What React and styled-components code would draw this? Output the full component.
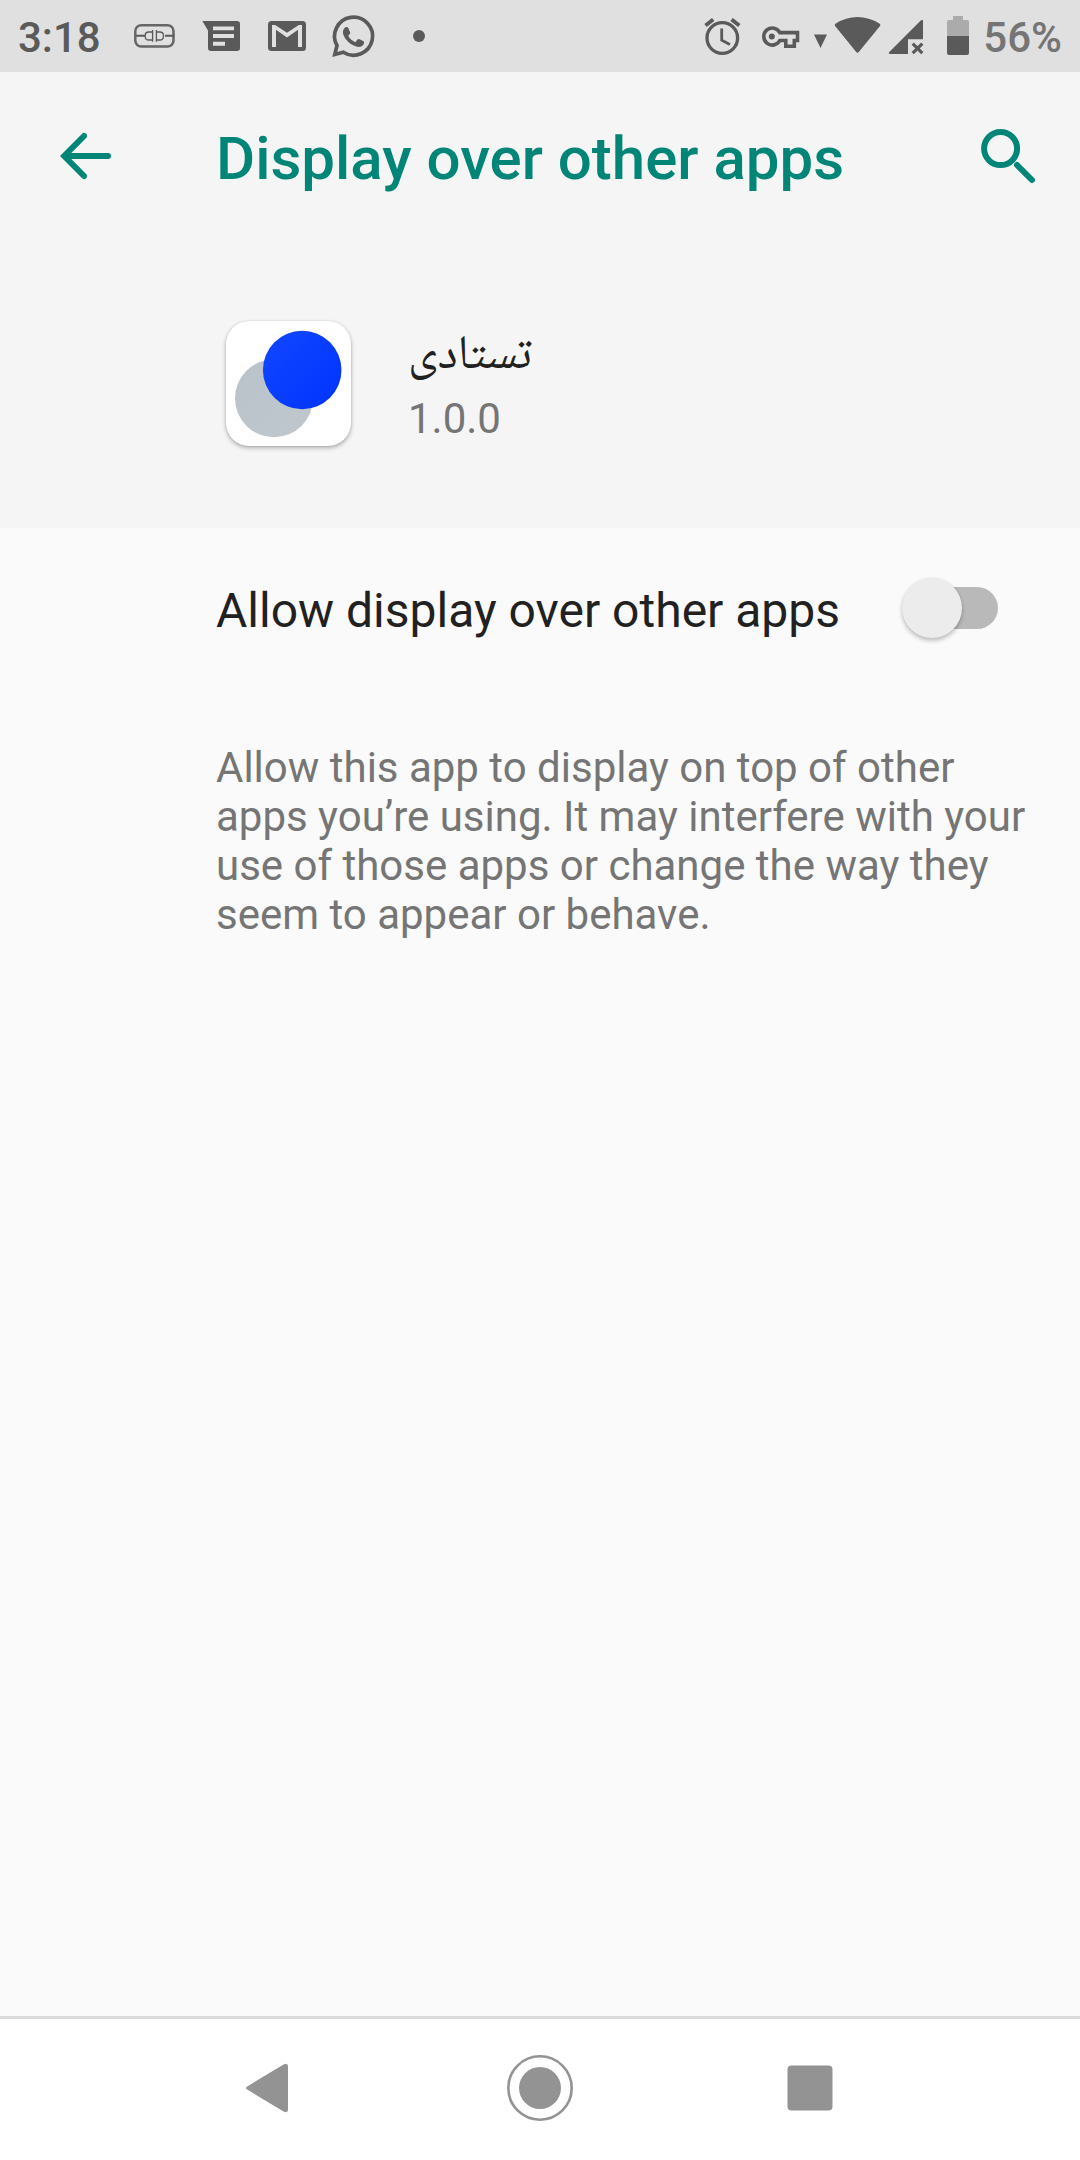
import React from "react";
import styled, { createGlobalStyle } from "styled-components";

const Global = createGlobalStyle`
  *, *::before, *::after { box-sizing: border-box; }
  body { margin: 0; background: #fafafa; font-family: Roboto, sans-serif; }
  svg { display: block; flex: none; }
`;

const Screen = styled.div`
  width: 1080px;
  height: 2160px;
  display: flex;
  flex-direction: column;
  background: #fafafa;
  overflow: hidden;
`;

const StatusBar = styled.header`
  height: 72px;
  flex: none;
  display: flex;
  align-items: center;
  justify-content: space-between;
  padding: 0 18px;
  background: #e0e0e0;
`;

const StatusGroup = styled.div`
  display: flex;
  align-items: center;
`;

const StatusText = styled.span`
  min-width: ${(p) => p.$width}px;
  text-align: ${(p) => p.$align || "left"};
  font-size: 42px;
  line-height: 49px;
  font-weight: 500;
  color: ${(p) => (p.$muted ? "#757575" : "#5a5a5a")};
  padding-top: 3px;
  white-space: nowrap;
`;

const AppBar = styled.div`
  height: 168px;
  flex: none;
  display: flex;
  align-items: center;
  background: #f5f5f5;
`;

const IconButton = styled.button`
  border: 0;
  padding: 0;
  background: none;
  width: ${(p) => p.$width}px;
  height: 168px;
  display: flex;
  align-items: center;
  justify-content: center;
`;

const Title = styled.h1`
  margin: 0;
  flex: 1;
  padding: 6px 0 0 44px;
  font-size: 60px;
  line-height: 70px;
  font-weight: 500;
  color: #008577;
  white-space: nowrap;
`;

const AppHeader = styled.section`
  height: 288px;
  flex: none;
  display: flex;
  align-items: flex-start;
  padding: 81px 0 0 226px;
  gap: 57px;
  background: #f5f5f5;
`;

const AppIcon = styled.div`
  width: 125px;
  height: 125px;
  flex: none;
  border-radius: 23px;
  overflow: hidden;
  background: #fff;
  box-shadow: 0 2px 4px rgba(0, 0, 0, 0.3), 0 0 2px rgba(0, 0, 0, 0.1);
`;

const AppText = styled.div`
  display: flex;
  flex-direction: column;
  align-items: flex-start;
`;

const AppName = styled.div`
  height: 73px;
  padding-top: 3px;
  font-family: "Noto Naskh Arabic UI", "Noto Naskh Arabic", "DejaVu Sans", sans-serif;
  font-size: 48px;
  line-height: 64px;
  color: #212121;
  white-space: nowrap;
`;

const AppVersion = styled.div`
  font-size: 42px;
  line-height: 49px;
  color: #757575;
`;

const SettingRow = styled.label`
  height: 160px;
  flex: none;
  display: flex;
  align-items: center;
  justify-content: space-between;
  padding: 0 82px 0 216px;
`;

const SettingLabel = styled.span`
  padding-top: 6px;
  font-size: 48px;
  line-height: 56px;
  color: #212121;
  white-space: nowrap;
`;

const Track = styled.span`
  width: 84px;
  height: 42px;
  border-radius: 21px;
  background: #b9b9b9;
  display: flex;
  align-items: center;
`;

const Thumb = styled.span`
  width: 60px;
  height: 60px;
  flex: none;
  margin-left: -12px;
  border-radius: 50%;
  background: #ececec;
  box-shadow: 0 3px 4px rgba(0, 0, 0, 0.22), 0 0 3px rgba(0, 0, 0, 0.08);
`;

const Description = styled.p`
  margin: 0;
  flex: 1;
  padding: 55px 40px 0 216px;
  font-size: 42px;
  line-height: 49px;
  color: #757575;
`;

const NavBar = styled.nav`
  height: 144px;
  flex: none;
  display: grid;
  grid-template-columns: repeat(3, 270px);
  justify-content: center;
  justify-items: center;
  align-items: center;
  padding-bottom: 3px;
  border-top: 3px solid #dcdcdc;
  background: #fff;
`;

const NotificationIcons = () => (
  <svg width="320" height="72" viewBox="117 0 320 72" fill="#5a5a5a">
    <g fill="none" stroke="#5a5a5a">
      <rect x="135.300" y="25.200" width="38.200" height="21.400" rx="6" strokeWidth="2.500" stroke="#666" />
      <path d="M136 35.700h9M165 35.700h9" strokeWidth="2" />
      <path d="M152.600 30v11.800M152.600 32h-3.800c-2 0-3.600 1.500-3.600 3.500v1c0 2 1.600 3.500 3.600 3.500h3.800M156.400 30v11.800M156.400 32h3.400c2 0 3.600 1.500 3.600 3.500v1c0 2-1.600 3.500-3.600 3.500h-3.400" strokeWidth="1.300" />
    </g>
    <path fillRule="evenodd" d="M202.300 21H237q3 0 3 3v24q0 3-3 3h-26q-3 0-3-3V30.500zM213 26.500v3.800h21v-3.800zM213 34v4h21v-4zM213 41.700v4h12v-4z" />
    <rect x="268" y="21" width="38" height="30" rx="3.500" />
    <path d="M272 47V25h3.200L287 32.700 298.800 25H302V47h-4V29.800L287 37.500 276 29.800V47z" fill="#e0e0e0" />
    <path d="M337 45.500A19 19 0 1 1 343.300 52.200L334.800 54.500Z" fill="none" stroke="#5a5a5a" strokeWidth="3.700" />
    <path transform="translate(18.200 1.600) scale(0.950)" d="M343.700 27.500c1.500-1.300 3.300-.9 4 .7l1.700 4c.4 1.100-.4 2.100-2 3.800 1.800 3.300 4.300 5.500 7.500 6.700l2.300-2.800c.7-.7 1.300-.8 2.100-.4l4.300 2.200c.6.400.5 2.700-.5 4-1.600 1.900-4.300 2.500-7.400 1.500-6.500-2-11.500-7-13.400-12.200-1-2.900-.4-5.800 1.400-7.500z" />
    <circle cx="419" cy="36" r="6" />
  </svg>
);

const SystemIcons = () => (
  <svg width="280" height="72" viewBox="700 0 280 72" fill="#5a5a5a">
    <g fill="none" stroke="#5a5a5a">
      <circle cx="722.300" cy="38" r="15.300" strokeWidth="3.300" />
      <path d="M721.700 28.500v11.700l8.200 4.200" strokeWidth="2.800" />
      <path d="M705.500 25.500l7.700-6M739.300 25.500l-7.700-6" strokeWidth="3.800" />
      <path d="M779.800 32.600H797.500V40.500H794.300V46.200H785.800V40.500H779.800A8.500 8.500 0 1 1 779.800 32.600Z" strokeWidth="3.600" />
      <path d="M912.700 43.700l9.600 9.500M922.300 43.700l-9.600 9.500" strokeWidth="3.200" />
    </g>
    <circle cx="771.800" cy="36.500" r="3" />
    <path d="M814 34.500h13l-6.500 13.500z" />
    <path d="M835.500 26.500q-1.700-1.700.3-3Q846 17 857.500 17t21.800 6.500q2 1.300.3 3L859 51.700q-1.500 2-3 0z" />
    <path d="M923 20v19.300H908V54H890q-2-.3-.7-2L921 20.300z" />
    <path d="M953 16h10v4h4q2 0 2 2v14h-22V22q0-2 2-2h4z" fill="#ababab" />
    <path d="M947 36h22v17q0 2-2 2h-18q-2 0-2-2z" />
  </svg>
);

const AppLogo = () => (
  <svg width="125" height="125" viewBox="0 0 125 125">
    <defs>
      <linearGradient id="front" x1="0" y1="0" x2="1" y2="1">
        <stop offset="0" stopColor="#1247ff" />
        <stop offset="1" stopColor="#0033ff" />
      </linearGradient>
      <linearGradient id="rear" x1="0" y1="0" x2="1" y2="1">
        <stop offset="0" stopColor="#bac2ca" />
        <stop offset="1" stopColor="#c0c8ce" />
      </linearGradient>
    </defs>
    <circle cx="48" cy="77.300" r="39" fill="url(#rear)" />
    <circle cx="76.200" cy="49" r="39.300" fill="url(#front)" />
  </svg>
);

export default function App() {
  return (
    <Screen>
      <Global />
      <StatusBar>
        <StatusGroup>
          <StatusText $width={99}>3:18</StatusText>
          <NotificationIcons />
        </StatusGroup>
        <StatusGroup>
          <SystemIcons />
          <StatusText $width={82} $align="right" $muted>56%</StatusText>
        </StatusGroup>
      </StatusBar>
      <AppBar>
        <IconButton $width={172} aria-label="Back">
          <svg width="52" height="48" viewBox="0 0 52 48" fill="none" stroke="#008577" strokeWidth="6" strokeLinecap="round">
            <path d="M48 24H6M24 4L4.200 24L24 44" />
          </svg>
        </IconButton>
        <Title>Display over other apps</Title>
        <IconButton $width={144} aria-label="Search">
          <svg width="56" height="56" viewBox="0 0 56 56" fill="none" stroke="#008577" strokeWidth="6" strokeLinecap="round">
            <circle cx="20.600" cy="20.600" r="16.500" />
            <path d="M37 37L52 52" />
          </svg>
        </IconButton>
      </AppBar>
      <AppHeader>
        <AppIcon>
          <AppLogo />
        </AppIcon>
        <AppText>
          <AppName lang="fa" dir="rtl">تستادی</AppName>
          <AppVersion>1.0.0</AppVersion>
        </AppText>
      </AppHeader>
      <SettingRow>
        <SettingLabel>Allow display over other apps</SettingLabel>
        <Track role="switch" aria-checked="false">
          <Thumb />
        </Track>
      </SettingRow>
      <Description>
        Allow this app to display on top of other apps you’re using. It may interfere with your use of those apps or change the way they seem to appear or behave.
      </Description>
      <NavBar>
        <svg width="48" height="54" viewBox="1 0 48 54" fill="#939393">
          <path d="M3 25L38.500 3.500Q43 1.500 43 5.500V48.500Q43 52.500 38.500 50.500L3 29Q-1 27 3 25Z" />
        </svg>
        <svg width="66" height="66" viewBox="0 0 66 66">
          <circle cx="33" cy="33" r="31.700" fill="none" stroke="#939393" strokeWidth="2.600" />
          <circle cx="33" cy="33" r="21" fill="#939393" />
        </svg>
        <svg width="46" height="46" viewBox="0 0 46 46">
          <rect x="0.500" y="0.500" width="45" height="45" rx="4" fill="#939393" />
        </svg>
      </NavBar>
    </Screen>
  );
}
